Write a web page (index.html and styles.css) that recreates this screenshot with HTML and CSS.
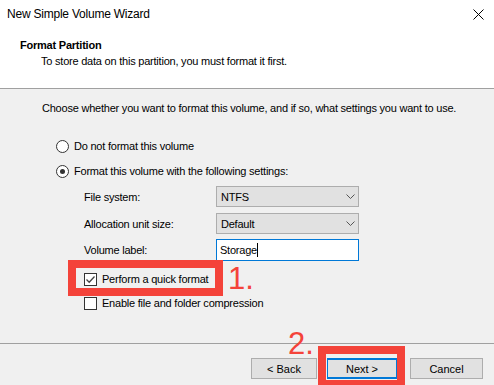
FILE: index.html
```html
<!DOCTYPE html>
<html lang="en">
<head>
    <meta charset="UTF-8">
    <title>New Simple Volume Wizard</title>
    <link rel="stylesheet" href="styles.css">
</head>
<body>
    <div class="window">
        <div class="top">
            <div class="titlebar">
                <span class="title">New Simple Volume Wizard</span>
                <svg class="close" width="11" height="11" viewBox="0 0 11 11">
                    <path d="M0.5 0.5 L10.5 10.5 M10.5 0.5 L0.5 10.5" stroke="#000" stroke-width="1" fill="none"/>
                </svg>
            </div>
            <div class="heading">
                <div class="heading-title">Format Partition</div>
                <div class="heading-sub">To store data on this partition, you must format it first.</div>
            </div>
        </div>

        <div class="content">
            <div class="intro">Choose whether you want to format this volume, and if so, what settings you want to use.</div>

            <div class="option first">
                <span class="radio"></span>
                <span>Do not format this volume</span>
            </div>
            <div class="option second">
                <span class="radio checked"></span>
                <span>Format this volume with the following settings:</span>
            </div>

            <div class="field row-fs">
                <span class="field-label">File system:</span>
                <div class="select">
                    <span>NTFS</span>
                    <svg width="9" height="5" viewBox="0 0 9 5"><path d="M0.5 0.5 L4.5 4.5 L8.5 0.5" stroke="#555" fill="none"/></svg>
                </div>
            </div>
            <div class="field row-alloc">
                <span class="field-label">Allocation unit size:</span>
                <div class="select">
                    <span>Default</span>
                    <svg width="9" height="5" viewBox="0 0 9 5"><path d="M0.5 0.5 L4.5 4.5 L8.5 0.5" stroke="#555" fill="none"/></svg>
                </div>
            </div>
            <div class="field row-label">
                <span class="field-label">Volume label:</span>
                <div class="textbox"><span>Storage</span><span class="caret"></span></div>
            </div>

            <div class="check-row quick">
                <span class="checkbox">
                    <svg width="11" height="11" viewBox="0 0 11 11"><path d="M1.5 5.5 L4.2 8.3 L9.5 2.5" stroke="#444" stroke-width="1.3" fill="none"/></svg>
                </span>
                <span>Perform a quick format</span>
                <span class="mark mark-quick"></span>
                <span class="step step-one">1.</span>
            </div>
            <div class="check-row compress">
                <span class="checkbox"></span>
                <span>Enable file and folder compression</span>
            </div>
        </div>

        <div class="footer">
            <button class="btn btn-back">&lt; Back</button>
            <div class="next-wrap">
                <button class="btn btn-next">Next &gt;</button>
                <span class="mark mark-next"></span>
                <span class="step step-two">2.</span>
            </div>
            <button class="btn btn-cancel">Cancel</button>
        </div>
    </div>
</body>
</html>
```

FILE: styles.css
```css
html, body {
    margin: 0;
    padding: 0;
}

body {
    background: #f0f0f0;
    font-family: "Liberation Sans", Arial, sans-serif;
    font-size: 11px;
    letter-spacing: -0.22px;
    color: #000;
    overflow: hidden;
}

.window {
    width: 494px;
    height: 385px;
    display: flex;
    flex-direction: column;
}

.top {
    height: 89px;
    box-sizing: border-box;
    background: #fff;
    border-bottom: 1px solid #a0a0a0;
}

.titlebar {
    height: 28px;
    display: flex;
    align-items: center;
    justify-content: space-between;
    padding: 0 10px 0 7px;
}

.title {
    font-size: 12px;
}

.close {
    margin-top: 1px;
}

.heading {
    padding-left: 20px;
    padding-top: 10px;
}

.heading-title {
    font-weight: bold;
    line-height: 14px;
}

.heading-sub {
    padding-left: 21px;
    margin-top: 2px;
    line-height: 14px;
}

.content {
    height: 254px;
    box-sizing: border-box;
    padding-top: 12px;
    display: flex;
    flex-direction: column;
}

.intro {
    margin-left: 42px;
    line-height: 14px;
}

.option {
    display: flex;
    align-items: center;
    gap: 5px;
    margin-left: 56px;
    height: 14px;
}

.option.first {
    margin-top: 24px;
}

.option.second {
    margin-top: 11px;
}

.radio {
    width: 11px;
    height: 11px;
    border: 1px solid #333;
    border-radius: 50%;
    background: #fff;
    position: relative;
}

.radio.checked::after {
    content: "";
    position: absolute;
    left: 3px;
    top: 3px;
    width: 5px;
    height: 5px;
    border-radius: 50%;
    background: #333;
}

.field {
    display: flex;
    align-items: center;
    margin-left: 84px;
}

.row-fs {
    margin-top: 8px;
}

.row-alloc {
    margin-top: 6px;
}

.row-label {
    margin-top: 5px;
}

.field-label {
    width: 132px;
}

.select {
    width: 143px;
    height: 21px;
    box-sizing: border-box;
    background: #e1e1e1;
    border: 1px solid #adadad;
    display: flex;
    align-items: center;
    justify-content: space-between;
    padding: 0 3px 0 4px;
}

.textbox {
    width: 143px;
    height: 22px;
    box-sizing: border-box;
    background: #fff;
    border: 1px solid #0078d7;
    display: flex;
    align-items: center;
    padding-left: 3px;
}

.caret {
    width: 1px;
    height: 14px;
    background: #000;
}

.check-row {
    position: relative;
    display: flex;
    align-items: center;
    gap: 5px;
    margin-left: 84px;
    height: 14px;
}

.quick {
    margin-top: 11px;
}

.compress {
    margin-top: 10px;
}

.checkbox {
    width: 11px;
    height: 11px;
    border: 1px solid #333;
    background: #fff;
    display: flex;
}

.mark {
    position: absolute;
    border: 8px solid #f4433a;
    box-sizing: border-box;
}

.mark-quick {
    left: -16px;
    top: -12px;
    width: 155px;
    height: 36px;
}

.step {
    position: absolute;
    color: #f4433a;
    font-size: 31px;
    line-height: 31px;
    letter-spacing: 0;
}

.step-one {
    left: 144px;
    top: -9px;
}

.footer {
    flex: 1;
    border-top: 1px solid #a0a0a0;
    display: flex;
    align-items: flex-start;
    justify-content: flex-end;
    padding: 14px 11px 0 0;
}

.btn {
    height: 21px;
    box-sizing: border-box;
    background: #e1e1e1;
    border: 1px solid #adadad;
    font-family: "Liberation Sans", Arial, sans-serif;
    font-size: 11px;
    color: #000;
    padding: 0;
}

.btn-back {
    width: 66px;
}

.next-wrap {
    position: relative;
    margin-left: 10px;
    margin-right: 13px;
}

.btn-next {
    width: 70px;
    border: 1px solid #0078d7;
    border-width: 2px 1px;
    display: block;
}

.btn-cancel {
    width: 73px;
}

.mark-next {
    left: -9px;
    top: -12px;
    width: 87px;
    height: 42px;
}

.step-two {
    left: -39px;
    top: -30px;
}
```
